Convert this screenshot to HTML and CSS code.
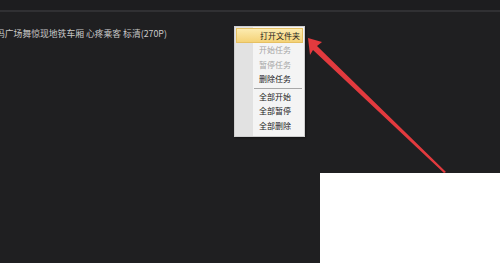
FILE: index.html
```html
<!DOCTYPE html>
<html lang="zh">
<head>
<meta charset="utf-8">
<link rel="stylesheet" href="styles.css">
</head>
<body>
<div class="app">
  <div class="topbar"></div>
  <div class="list">
    <div class="task">妈广场舞惊现地铁车厢 心疼乘客 标清(270P)</div>
  </div>
  <div class="menu">
    <div class="item active">打开文件夹</div>
    <div class="item disabled">开始任务</div>
    <div class="item disabled">暂停任务</div>
    <div class="item">删除任务</div>
    <div class="sep"></div>
    <div class="item">全部开始</div>
    <div class="item">全部暂停</div>
    <div class="item">全部删除</div>
  </div>
  <svg class="arrow" width="500" height="263" viewBox="0 0 500 263">
    <polygon points="308,38 322,42 317,46 446,172 444,173 313,50 310,55" fill="#e23a3e"/>
  </svg>
  <div class="blank"></div>
</div>
</body>
</html>
```
FILE: styles.css
```css
html, body {
  margin: 0;
  padding: 0;
  background: #1f1f21;
}
.app {
  position: relative;
  width: 500px;
  height: 263px;
  overflow: hidden;
  background: #1f1f21;
  font-family: "Noto Sans CJK SC", "Noto Sans", sans-serif;
}
.topbar {
  height: 10px;
  background: #1d1d1f;
  border-bottom: 2px solid #303033;
}
.list {
  padding-top: 16px;
}
.task {
  margin-left: -4px;
  font-size: 8.8px;
  line-height: 12px;
  color: #c9c9c9;
  white-space: nowrap;
}
.menu {
  position: absolute;
  left: 234px;
  top: 26px;
  width: 69px;
  padding: 1px 0 3px;
  background: linear-gradient(to right, #e2e2e2 0, #e2e2e2 18px, #f4f4f4 18px);
  border: 1px solid #cfcfcf;
  box-shadow: 1px 1px 2px rgba(0,0,0,0.4);
}
.item {
  height: 14.5px;
  line-height: 14.5px;
  padding-left: 24px;
  font-size: 8px;
  color: #1a1a1a;
  white-space: nowrap;
}
.item.active {
  background: linear-gradient(to bottom, #fcebb0, #f4d277);
  border: 1px solid #e6c062;
  margin: 0 1px;
  padding-left: 23px;
  height: 13px;
  line-height: 13px;
}
.item.disabled {
  color: #a5a5a5;
}
.sep {
  height: 1px;
  margin: 1px 2px 1px 19px;
  background: #a8a8a8;
}
.arrow {
  position: absolute;
  left: 0;
  top: 0;
}
.blank {
  position: absolute;
  left: 320px;
  top: 173px;
  width: 180px;
  height: 90px;
  background: #ffffff;
}
```
